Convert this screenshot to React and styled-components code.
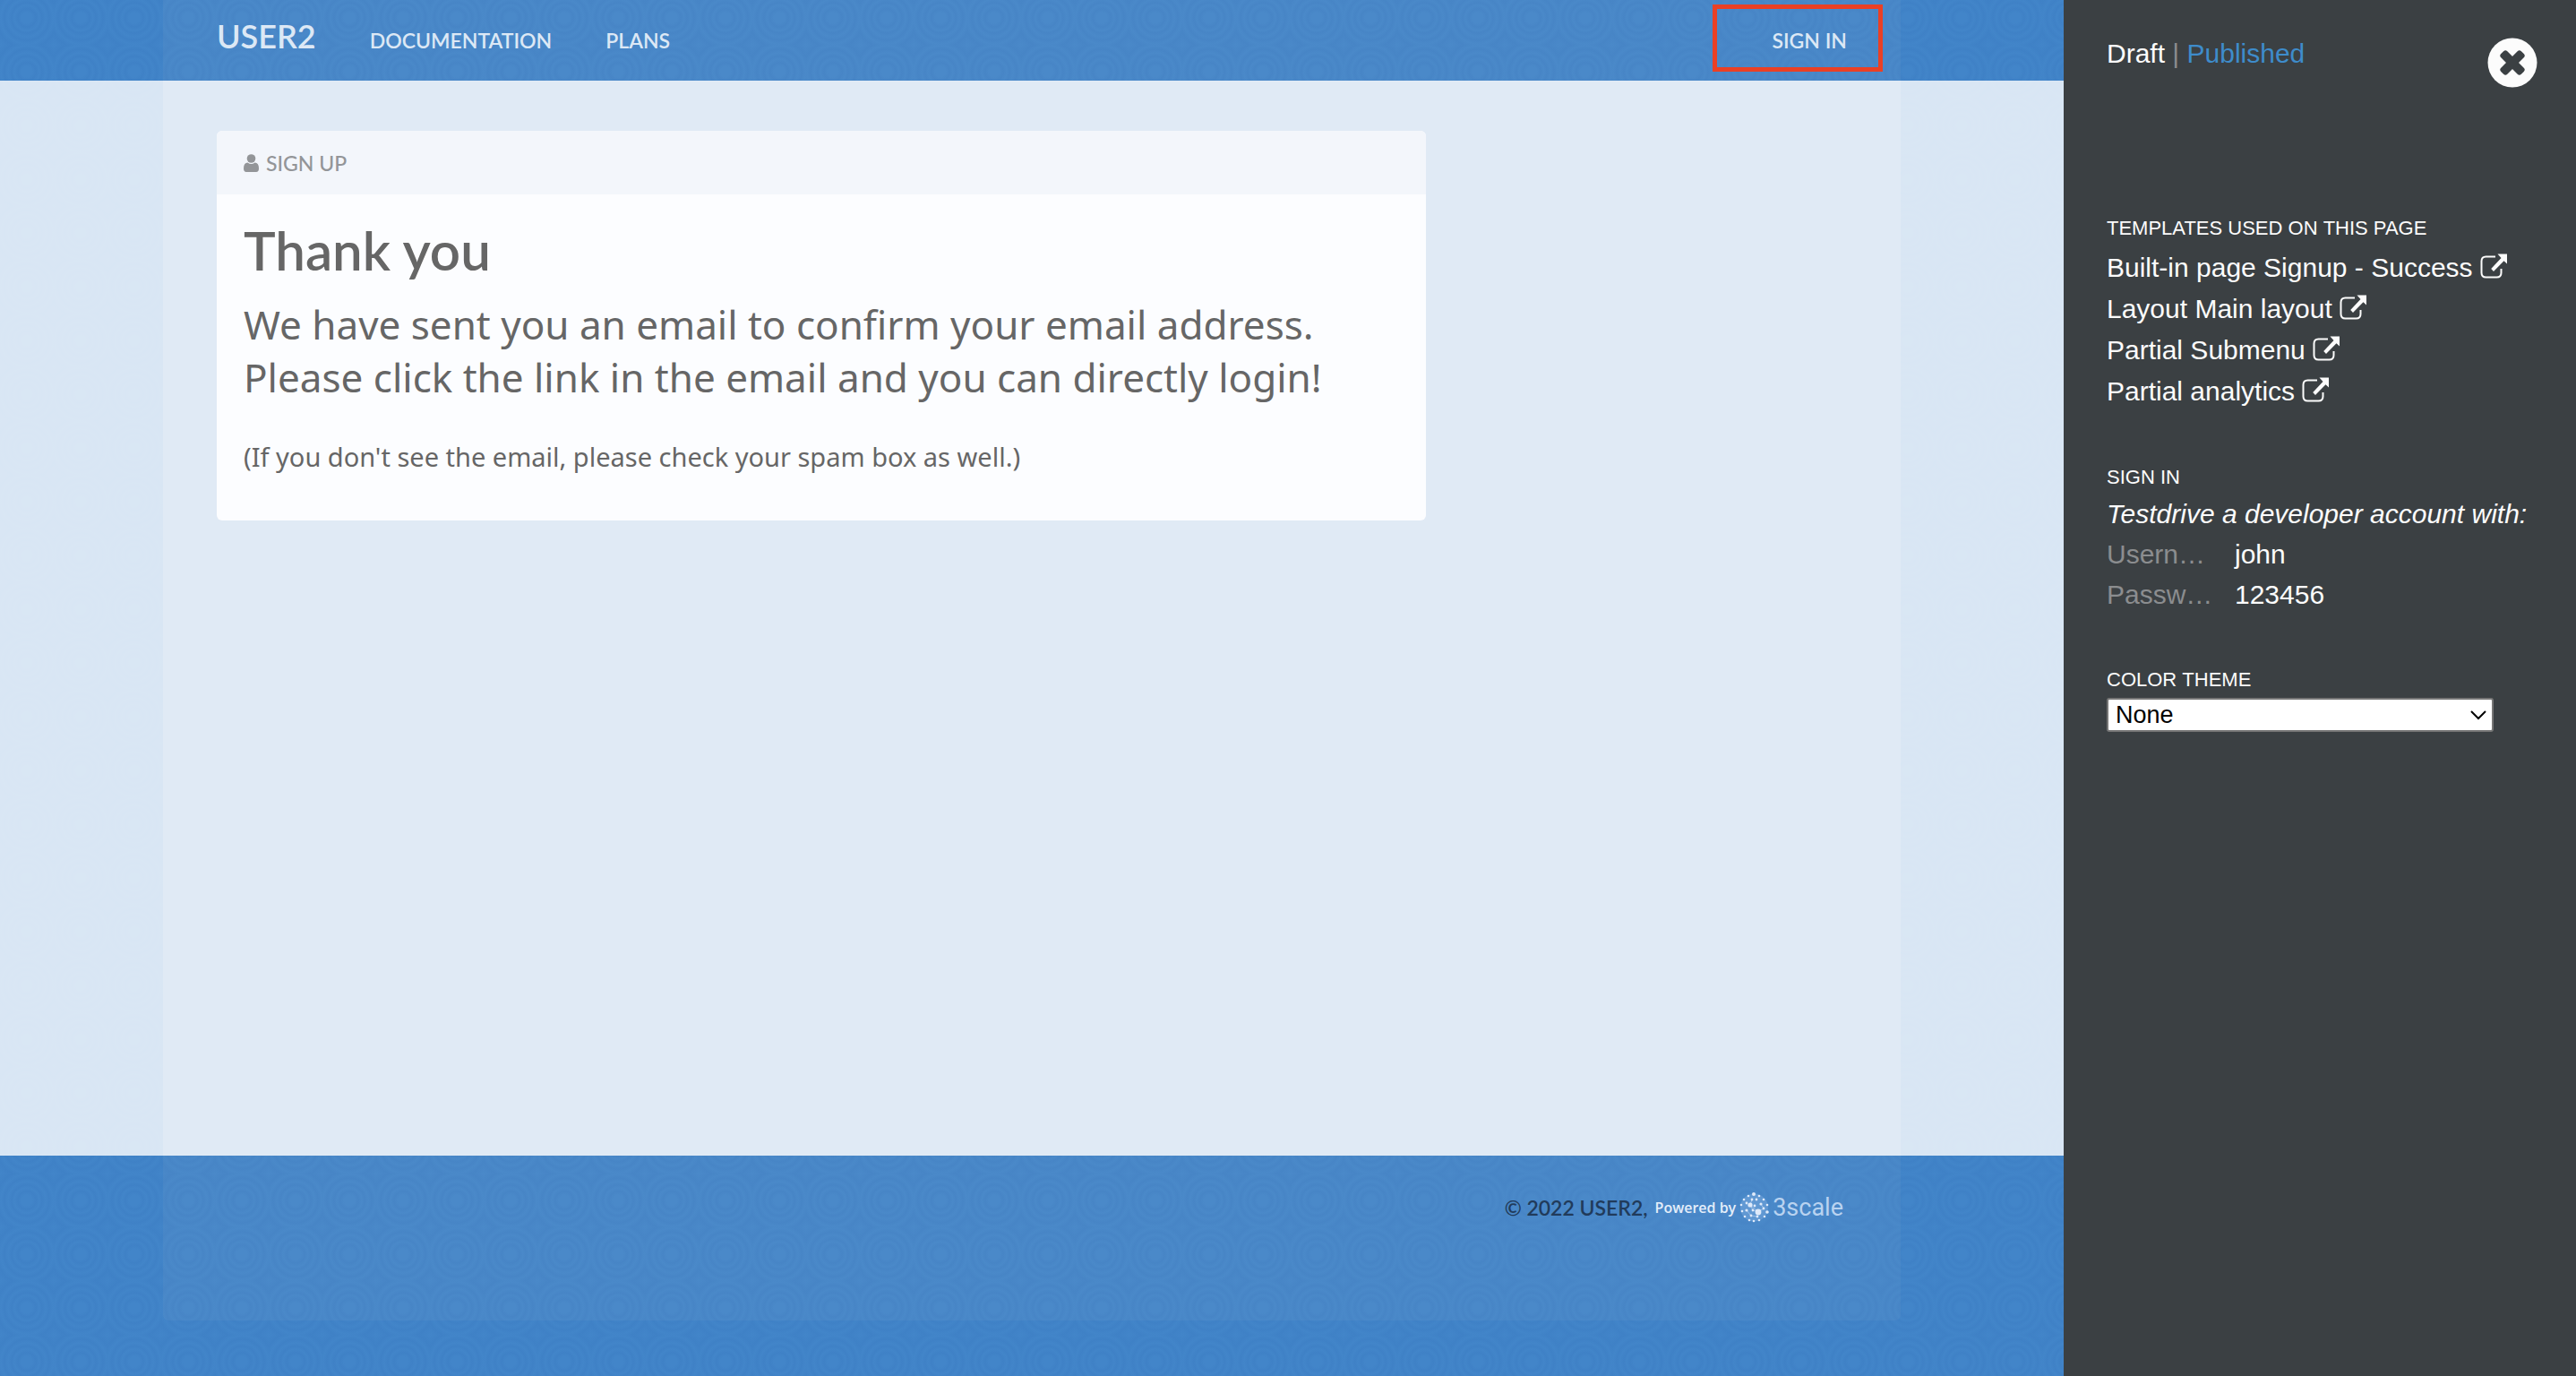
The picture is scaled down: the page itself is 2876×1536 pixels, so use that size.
import React from "react";
import styled, { createGlobalStyle } from "styled-components";

const display = 'Lato, "Liberation Sans", sans-serif';
const reading = '"Noto Sans", "DejaVu Sans", sans-serif';
const system = '"Liberation Sans", Arial, sans-serif';

const GlobalStyle = createGlobalStyle`
  *, *::before, *::after { box-sizing: border-box; }
  body { margin: 0; font-family: ${system}; }
  h1, h2, p, ul, dl, dd { margin: 0; padding: 0; }
  a { color: inherit; text-decoration: none; }
`;

const Shell = styled.div`
  display: flex;
  min-height: 100vh;
`;

const Site = styled.div`
  flex: 1;
  display: flex;
  flex-direction: column;
  background: #4082c7 radial-gradient(
    circle,
    #4285c9 6px, #3f81c6 10px, #4285c9 14px, #3f81c6 17px, #4285c9 21px,
    #3f81c6 25px, #4285c9 29px, #3f81c6 34px, #4285c9 42px
  ) 0 -10px / 60px 60px;
`;

const Container = styled.div`
  width: 100%;
  max-width: 1940px;
  margin: 0 auto;
  padding: 0 60px;
`;

const HeaderInner = styled(Container)`
  display: flex;
  align-items: baseline;
  gap: 60px;
  height: 90px;
  padding-top: 16px;
  background: rgba(212, 212, 212, 0.06);
  color: #dce8f5;
  font-family: ${display};
  font-weight: 600;
`;

const Brand = styled.a`
  font-size: 36px;
  line-height: 48px;
`;

const NavLink = styled.a`
  font-size: 23px;
  line-height: 32px;
`;

const SignInLink = styled(NavLink)`
  position: relative;
  margin-left: auto;
  &::after {
    content: "";
    position: absolute;
    inset: -24px -40px -19px -66px;
    border: 5px solid #ea4025;
  }
`;

const Main = styled.main`
  flex: 1;
  display: flex;
  background: rgba(255, 255, 255, 0.8);
`;

const MainInner = styled(Container)`
  padding: 56px 30px;
  background: #e0eaf5;
`;

const Column = styled.div`
  width: 75%;
  padding: 0 30px;
`;

const Panel = styled.section`
  border-radius: 6px;
  overflow: hidden;
  background: #fcfdff;
  color: #666;
`;

const PanelHeader = styled.div`
  display: flex;
  align-items: center;
  gap: 8px;
  height: 71px;
  padding: 0 30px;
  background: #f3f6fb;
  color: #939598;
  font-family: ${display};
  font-weight: 500;
  font-size: 23px;
`;

const PanelBody = styled.div`
  padding: 26px 30px 51px;
  font-family: ${reading};
`;

const Title = styled.h1`
  font-family: ${display};
  font-weight: 600;
  font-size: 60px;
  line-height: 72px;
`;

const Lead = styled.p`
  padding-top: 18px;
  font-size: 44px;
  line-height: 59px;
`;

const Note = styled.p`
  padding-top: 39px;
  font-size: 29px;
  line-height: 40px;
`;

const Footer = styled.footer`
  height: 246px;
`;

const FooterInner = styled(Container)`
  display: flex;
  align-items: flex-start;
  justify-content: flex-end;
  gap: 8px;
  height: 184px;
  padding-top: 40px;
  border-radius: 0 0 6px 6px;
  background: rgba(212, 212, 212, 0.06);
  line-height: 36px;
`;

const Copyright = styled.span`
  color: #213b5b;
  font-family: ${display};
  font-weight: 600;
  font-size: 23px;
`;

const Powered = styled.a`
  display: flex;
  align-items: center;
  gap: 4px;
  padding-right: 4px;
  color: #e4eefa;
  font-family: "Open Sans", sans-serif;
  font-weight: 600;
  font-size: 16px;
`;

const LogoName = styled.span`
  color: #b9d3f0;
  font-family: Roboto, sans-serif;
  font-weight: 400;
  font-size: 27px;
`;

const Sidebar = styled.aside`
  position: relative;
  flex: none;
  width: 572px;
  padding: 38px 48px;
  background: #3b4043;
  color: #fcfcfc;
  font-size: 30px;
`;

const Modes = styled.nav`
  height: 204px;
  line-height: 44px;
`;

const Separator = styled.span`
  color: #8b8d8f;
`;

const PublishedLink = styled.a`
  color: #3e8ccb;
`;

const CloseButton = styled.button`
  position: absolute;
  top: 42px;
  right: 43px;
  width: 56px;
  height: 56px;
  padding: 0;
  border: 0;
  background: none;
  svg { display: block; }
`;

const Group = styled.section`
  margin-bottom: 60px;
`;

const GroupTitle = styled.h2`
  font-weight: 400;
  font-size: 31px;
  line-height: 20px;
  padding-bottom: 11px;
  font-variant: all-small-caps;
`;

const TemplateList = styled.ul`
  list-style: none;
  padding-top: 3px;
  line-height: 46px;
  svg { margin-left: 8px; vertical-align: -2px; }
`;

const Hint = styled.p`
  font-style: italic;
  line-height: 45px;
  white-space: nowrap;
`;

const Credentials = styled.dl`
  display: grid;
  grid-template-columns: 119px 1fr;
  column-gap: 24px;
  line-height: 45px;
`;

const Term = styled.dt`
  white-space: nowrap;
  color: #8b8d8f;
`;

const ThemeLabel = styled(GroupTitle).attrs({ as: "label" })`
  display: block;
  padding-bottom: 13px;
`;

const SelectBox = styled.div`
  position: relative;
  width: 432px;
  svg {
    position: absolute;
    right: 8px;
    top: 14px;
    pointer-events: none;
  }
`;

const ThemeSelect = styled.select`
  appearance: none;
  display: block;
  width: 100%;
  height: 38px;
  padding: 0 8px;
  border: 2px solid #767676;
  border-radius: 3px;
  background: #fff;
  color: #000;
  font-family: ${system};
  font-size: 27px;
`;

const UserIcon = () => (
  <svg width="17" height="20" viewBox="0 0 17 20" fill="currentColor" aria-hidden="true">
    <ellipse cx="8.500" cy="5" rx="4.800" ry="4.800" />
    <path d="M4.500 9.500Q0 9.800 0 16Q0 20 3 20H14Q17 20 17 16Q17 9.800 12.500 9.500Q8.500 12.500 4.500 9.500Z" />
  </svg>
);

const ExternalIcon = () => (
  <svg width="30" height="28" viewBox="0 0 30 28" aria-hidden="true">
    <path d="M17 3.500H6.500Q1.500 3.500 1.500 8.500V21.500Q1.500 26.500 6.500 26.500H18.500Q23.500 26.500 23.500 21.500V17" fill="none" stroke="currentColor" strokeWidth="2" />
    <path d="M19.500 0.500H30V11.500L26.500 8.300L15 20L12.200 17L23.500 5Z" fill="currentColor" />
  </svg>
);

const dots = [
  [16, 2, 2], [10, 4, 1.3], [22, 4, 1.3], [27, 8, 1.3], [5, 8, 1.3], [2, 14, 1.3], [31, 14, 1.3],
  [3, 21, 1.3], [31, 22, 1.8], [6, 27, 1.3], [28, 27, 1.3], [11, 31, 1.3], [16, 32, 1.3], [22, 31, 1.3],
  [12, 14, 2.6], [21, 22, 3.4], [19, 8, 1.4], [14, 8, 1.4], [24, 13, 1.6], [8, 20, 1.6], [13, 26, 1.4], [8, 12, 1.4],
  [27, 18, 1.4], [17, 15, 1.4], [15, 20, 1.4], [20, 27, 1.4],
];

const GlobeLogo = () => (
  <svg width="33" height="34" viewBox="0 0 33 34" aria-hidden="true">
    <circle cx="16.500" cy="17" r="15.500" fill="#7aaade" fillOpacity="0.5" />
    <path d="M12 14L21 22L15 20ZM12 14L14 8M21 22L27 18L24 13M8 20L13 26L20 27" fill="none" stroke="#9dc0e8" strokeWidth="1" />
    <g fill="#dfeafa">
      {dots.map(([x, y, r]) => <circle key={`${x}-${y}`} cx={x} cy={y} r={r} />)}
    </g>
  </svg>
);

const templates = [
  "Built-in page Signup - Success",
  "Layout Main layout",
  "Partial Submenu",
  "Partial analytics",
];

export default function App() {
  return (
    <>
      <GlobalStyle />
      <Shell>
        <Site>
          <header>
            <HeaderInner>
              <Brand href="#">USER2</Brand>
              <NavLink href="#">DOCUMENTATION</NavLink>
              <NavLink href="#">PLANS</NavLink>
              <SignInLink href="#">SIGN IN</SignInLink>
            </HeaderInner>
          </header>
          <Main>
            <MainInner>
              <Column>
                <Panel>
                  <PanelHeader><UserIcon />SIGN UP</PanelHeader>
                  <PanelBody>
                    <Title>Thank you</Title>
                    <Lead>
                      We have sent you an email to confirm your email address.<br />
                      Please click the link in the email and you can directly login!
                    </Lead>
                    <Note>(If you don't see the email, please check your spam box as well.)</Note>
                  </PanelBody>
                </Panel>
              </Column>
            </MainInner>
          </Main>
          <Footer>
            <FooterInner>
              <Copyright>© 2022 USER2,</Copyright>
              <Powered href="#">
                Powered by
                <GlobeLogo />
                <LogoName>3scale</LogoName>
              </Powered>
            </FooterInner>
          </Footer>
        </Site>
        <Sidebar>
          <CloseButton type="button" aria-label="Close">
            <svg width="56" height="56" viewBox="0 0 56 56">
              <circle cx="28" cy="28" r="27.500" fill="#fcfcfc" />
              <g fill="#3b4043">
                <rect x="12" y="23" width="32" height="10" rx="3" transform="rotate(45 28 28)" />
                <rect x="12" y="23" width="32" height="10" rx="3" transform="rotate(-45 28 28)" />
              </g>
            </svg>
          </CloseButton>
          <Modes>
            <a href="#">Draft</a> <Separator>|</Separator> <PublishedLink href="#">Published</PublishedLink>
          </Modes>
          <Group>
            <GroupTitle>Templates used on this page</GroupTitle>
            <TemplateList>
              {templates.map((name) => (
                <li key={name}><a href="#">{name}<ExternalIcon /></a></li>
              ))}
            </TemplateList>
          </Group>
          <Group>
            <GroupTitle>Sign in</GroupTitle>
            <Hint>Testdrive a developer account with:</Hint>
            <Credentials>
              <Term>Usern…</Term>
              <dd>john</dd>
              <Term>Passw…</Term>
              <dd>123456</dd>
            </Credentials>
          </Group>
          <Group>
            <ThemeLabel htmlFor="theme">Color theme</ThemeLabel>
            <SelectBox>
              <ThemeSelect id="theme" defaultValue="None">
                <option>None</option>
              </ThemeSelect>
              <svg width="18" height="11" viewBox="0 0 18 11" aria-hidden="true">
                <path d="M1 1L9 9L17 1" fill="none" stroke="#000" strokeWidth="2" />
              </svg>
            </SelectBox>
          </Group>
        </Sidebar>
      </Shell>
    </>
  );
}
